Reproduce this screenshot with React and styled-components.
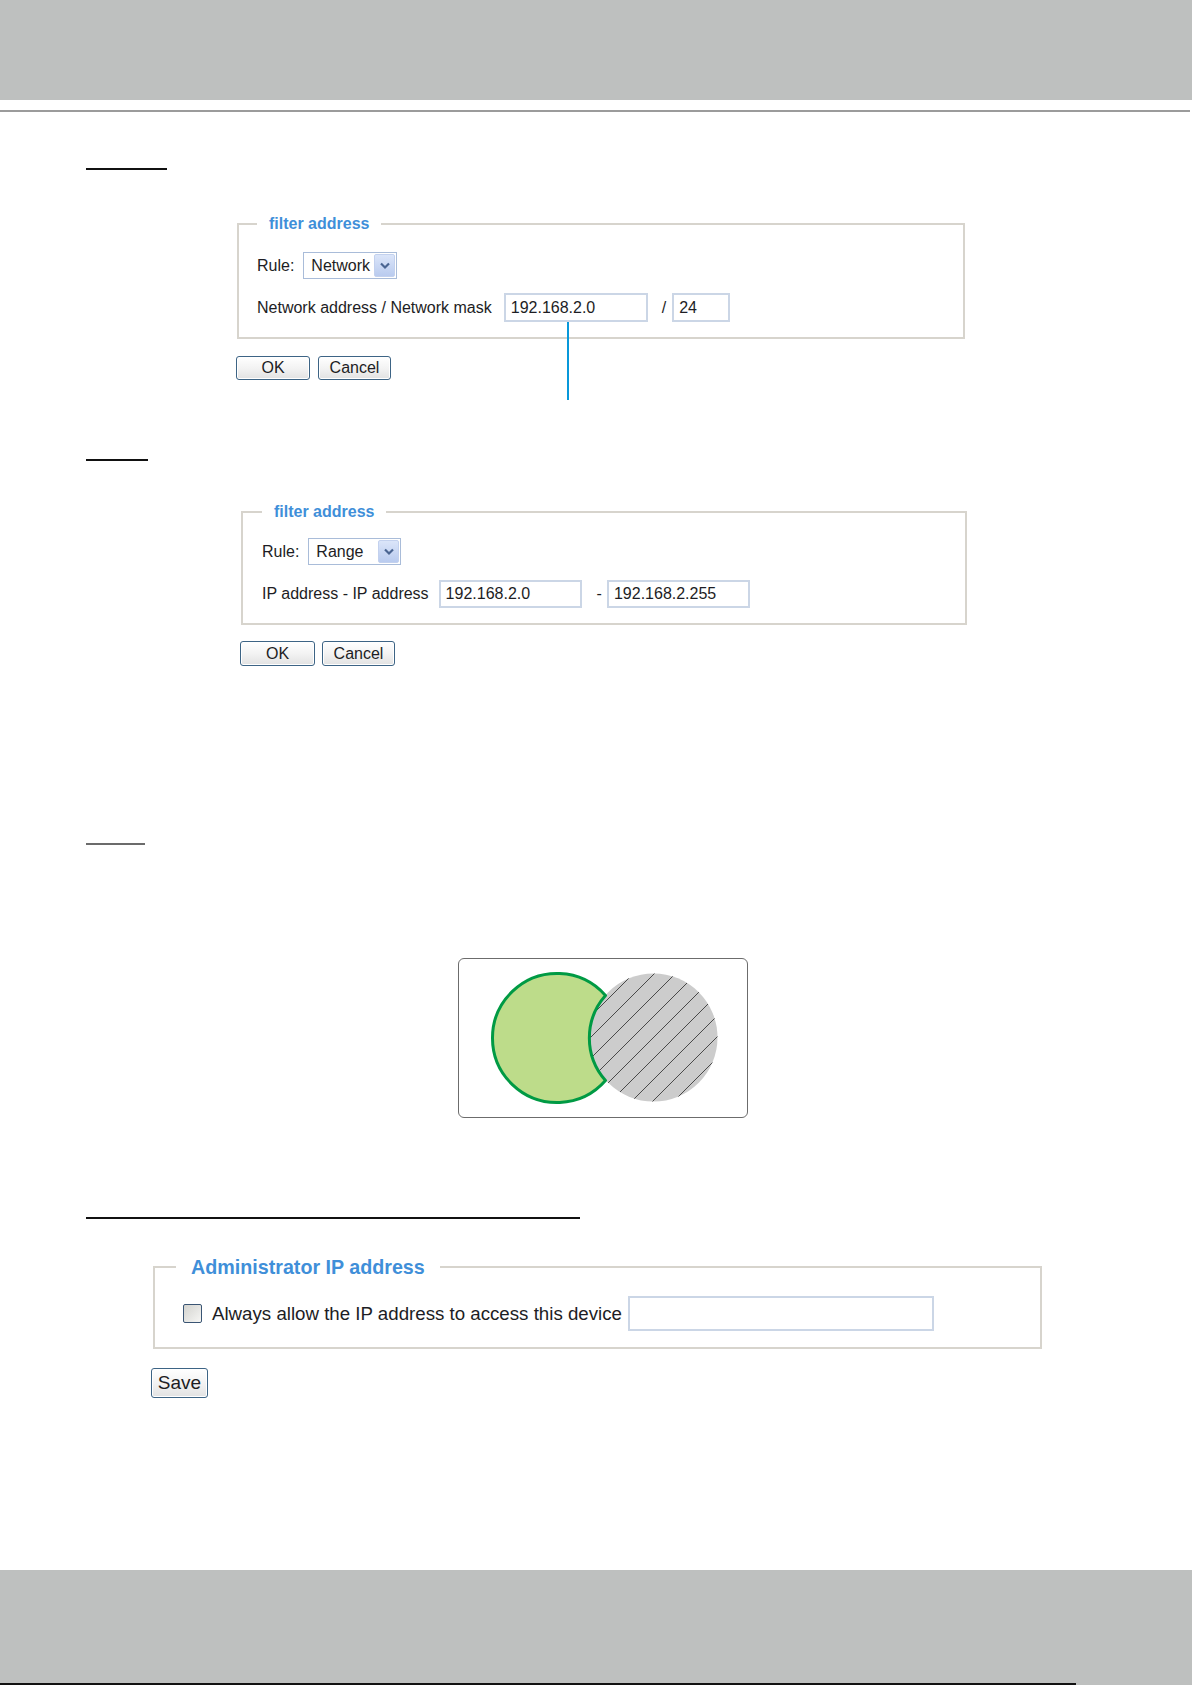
import React from 'react';
import styled, { createGlobalStyle } from 'styled-components';

const GlobalStyle = createGlobalStyle`
  html, body {
    margin: 0;
    padding: 0;
    background: #fff;
  }
  body {
    font-family: "Liberation Sans", Arial, sans-serif;
    color: #1d1d24;
  }
`;

const Page = styled.div`
  width: 1192px;
  min-height: 1685px;
  display: flex;
  flex-direction: column;
`;

const Banner = styled.header`
  flex-shrink: 0;
  height: 100px;
  background: #bec0bf;
`;

const BannerRule = styled.div`
  margin-top: 10px;
  width: 1190px;
  height: 2px;
  background: #9b9b9b;
`;

const Content = styled.main`
  display: flex;
  flex-direction: column;
  align-items: flex-start;
`;

/* the section titles are blank in the picture, only their underline shows */
const SectionMark = styled.div`
  margin: ${(p) => p.$top}px 0 0 86px;
  width: ${(p) => p.$width}px;
  border-bottom: 2px solid ${(p) => p.$color || '#111'};
`;

const Fieldset = styled.fieldset`
  box-sizing: border-box;
  min-inline-size: 0;
  width: ${(p) => p.$width}px;
  margin: ${(p) => p.$top}px 0 0 ${(p) => p.$left}px;
  padding: 0 ${(p) => p.$padX}px ${(p) => p.$padBottom}px;
  border: 2px solid #d7d4cd;
`;

const Legend = styled.legend`
  padding: 0 ${(p) => (p.$big ? 15 : 12)}px;
  font-weight: bold;
  font-size: ${(p) => (p.$big ? 19.7 : 16)}px;
  line-height: ${(p) => (p.$big ? 24 : 20)}px;
  color: #3f8fd9;
`;

const Rows = styled.div`
  display: flex;
  flex-direction: column;
  gap: ${(p) => p.$gap}px;
  padding-top: ${(p) => p.$top}px;
`;

const Row = styled.div`
  display: flex;
  align-items: center;
  gap: ${(p) => p.$gap ?? 10}px;
  padding-left: ${(p) => p.$indent || 0}px;
  font-size: ${(p) => p.$size || 16}px;
  white-space: nowrap;
`;

const Select = styled.div`
  box-sizing: border-box;
  display: flex;
  align-items: stretch;
  width: ${(p) => p.$width}px;
  height: 27px;
  padding: 1px;
  border: 1px solid #a9bcd9;
  background: #fff;
`;

const SelectValue = styled.span`
  flex: 1;
  display: flex;
  align-items: center;
  padding-left: 6px;
  font-size: 16px;
`;

const DropButton = styled.span`
  box-sizing: border-box;
  width: 21px;
  display: flex;
  align-items: center;
  justify-content: center;
  border: 1px solid #c3d1ee;
  border-radius: 2px;
  background: linear-gradient(#dbe5f9, #b9cbef);
`;

const TextInput = styled.input`
  box-sizing: border-box;
  width: ${(p) => p.$width}px;
  height: ${(p) => p.$height}px;
  margin: 0;
  padding: 0 5px;
  border: 2px solid #cbd6e6;
  background: #fff;
  font: inherit;
  color: inherit;
  outline: none;
`;

const Sep = styled.span`
  margin: 0 ${(p) => p.$after}px 0 ${(p) => p.$before}px;
`;

const InputAnchor = styled.span`
  position: relative;
  display: flex;
`;

const Callout = styled.span`
  position: absolute;
  left: 63px;
  top: 100%;
  width: 2px;
  height: 78px;
  background: #0898da;
`;

const Actions = styled.div`
  display: flex;
  gap: ${(p) => p.$gap ?? 7}px;
  margin: ${(p) => p.$top}px 0 0 ${(p) => p.$left}px;
`;

const Button = styled.button`
  box-sizing: border-box;
  width: ${(p) => p.$width}px;
  height: ${(p) => p.$height || 25}px;
  padding: 0;
  border: 1px solid #3d6485;
  border-radius: 3px;
  background: linear-gradient(#ffffff, #f3f3f3 50%, #e2e2e2);
  box-shadow: inset 0 0 0 1px #fff;
  font-family: inherit;
  font-size: ${(p) => p.$size || 16}px;
  color: #1d1d24;
`;

const Checkbox = styled.input.attrs({ type: 'checkbox' })`
  appearance: none;
  box-sizing: border-box;
  width: 19px;
  height: 19px;
  margin: 0;
  border: 1px solid #3a5574;
  border-radius: 2px;
  background: linear-gradient(135deg, #d3d3cf, #f6f6f4);
`;

const CheckLabel = styled.span`
  margin: 0 6px 0 10px;
`;

const DiagramFrame = styled.div`
  box-sizing: border-box;
  width: 290px;
  height: 160px;
  margin: 113px 0 0 458px;
  border: 1.5px solid #6c6c6c;
  border-radius: 6px;
  svg {
    display: block;
  }
`;

const Footer = styled.footer`
  flex-shrink: 0;
  margin-top: auto;
  height: 115px;
  display: flex;
  flex-direction: column;
  justify-content: flex-end;
  background: #bec0bf;
`;

const FooterRule = styled.div`
  width: 1076px;
  height: 2px;
  background: #111;
`;

const Chevron = () => (
  <svg width="12" height="9" viewBox="0 0 12 9">
    <path d="M2 2.5 L6 6.5 L10 2.5" fill="none" stroke="#4a6592" strokeWidth="2.2" />
  </svg>
);

const RuleSelect = ({ value, width }) => (
  <Select $width={width}>
    <SelectValue>{value}</SelectValue>
    <DropButton>
      <Chevron />
    </DropButton>
  </Select>
);

const hatch = [-4, -3, -2, -1, 0, 1, 2, 3, 4].map((k) => 276 + k * 21);

const Diagram = () => (
  <DiagramFrame>
    <svg width="287" height="157" viewBox="1.5 1.5 287 157">
      <defs>
        <clipPath id="denyArea">
          <circle cx="196" cy="80" r="64" />
        </clipPath>
      </defs>
      <circle cx="196" cy="80" r="64" fill="#cccccc" />
      <g clipPath="url(#denyArea)" stroke="#3a3a3a" strokeWidth="0.9">
        {hatch.map((c) => (
          <line key={c} x1={c - 200} y1={200} x2={c} y2={0} />
        ))}
      </g>
      <path
        d="M148 38 A64.5 64.5 0 1 0 148 123 A64 64 0 0 1 148 38 Z"
        fill="#bddc8a"
        stroke="#009a44"
        strokeWidth="3"
        strokeLinejoin="round"
      />
    </svg>
  </DiagramFrame>
);

export default function App() {
  return (
    <Page>
      <GlobalStyle />
      <Banner />
      <BannerRule />

      <Content>
        <SectionMark $top={56} $width={81} />

        <Fieldset $top={44} $left={237} $width={728} $padX={18} $padBottom={15}>
          <Legend>filter address</Legend>
          <Rows $top={18} $gap={14}>
            <Row $gap={9}>
              <span>Rule:</span>
              <RuleSelect value="Network" width={94} />
            </Row>
            <Row $gap={0}>
              <span style={{ marginRight: 12 }}>Network address / Network mask</span>
              <InputAnchor>
                <TextInput $width={144} $height={29} value="192.168.2.0" readOnly />
                <Callout />
              </InputAnchor>
              <Sep $before={14} $after={6}>/</Sep>
              <TextInput $width={58} $height={29} value="24" readOnly />
            </Row>
          </Rows>
        </Fieldset>

        <Actions $top={17} $left={236} $gap={8}>
          <Button $width={74} $height={24}>OK</Button>
          <Button $width={73} $height={24}>Cancel</Button>
        </Actions>

        <SectionMark $top={79} $width={62} />

        <Fieldset $top={41} $left={241} $width={726} $padX={19} $padBottom={15}>
          <Legend>filter address</Legend>
          <Rows $top={16} $gap={15}>
            <Row $gap={9}>
              <span>Rule:</span>
              <RuleSelect value="Range" width={93} />
            </Row>
            <Row $gap={0}>
              <span style={{ marginRight: 10 }}>IP address - IP address</span>
              <TextInput $width={143} $height={28} value="192.168.2.0" readOnly />
              <Sep $before={15} $after={5}>-</Sep>
              <TextInput $width={143} $height={28} value="192.168.2.255" readOnly />
            </Row>
          </Rows>
        </Fieldset>

        <Actions $top={16} $left={240} $gap={7}>
          <Button $width={75}>OK</Button>
          <Button $width={73}>Cancel</Button>
        </Actions>

        <SectionMark $top={177} $width={59} $color="#6b6b6b" />

        <Diagram />

        <SectionMark $top={99} $width={494} />

        <Fieldset $top={36} $left={153} $width={889} $padX={21} $padBottom={16}>
          <Legend $big>Administrator IP address</Legend>
          <Rows $top={17} $gap={0}>
            <Row $gap={0} $indent={7} $size={18.7}>
              <Checkbox />
              <CheckLabel>Always allow the IP address to access this device</CheckLabel>
              <TextInput $width={306} $height={35} value="" readOnly />
            </Row>
          </Rows>
        </Fieldset>

        <Actions $top={19} $left={151}>
          <Button $width={57} $height={30} $size={19}>Save</Button>
        </Actions>
      </Content>

      <Footer>
        <FooterRule />
      </Footer>
    </Page>
  );
}
